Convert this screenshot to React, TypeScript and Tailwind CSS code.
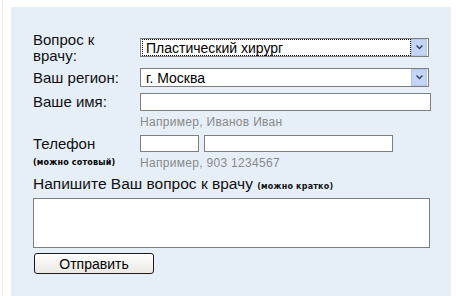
import { FC, ReactNode } from "react";

const Arrow: FC = () => (
  <div className="flex h-[17px] w-[16px] items-center justify-center border border-[#b4c8ee] bg-[#c3d4f7]">
    <svg width="7" height="5" viewBox="0 0 7 5">
      <path d="M0.5 0.5 L3.5 3.5 L6.5 0.5" fill="none" stroke="#34486e" strokeWidth="1.5" />
    </svg>
  </div>
);

const Select: FC<{ value: string; focused?: boolean }> = ({ value, focused }) => (
  <div className="flex h-[19px] w-[289px] items-center border border-[#7f7f7f] bg-white pl-[1px] pr-[1px]">
    <div
      className={
        focused
          ? "flex h-[17px] flex-1 items-center border border-dotted border-black pl-[3px] text-[14px] leading-none"
          : "flex h-[17px] flex-1 items-center pl-[4px] text-[14px] leading-none"
      }
    >
      {value}
    </div>
    <Arrow />
  </div>
);

const Label: FC<{ children: ReactNode }> = ({ children }) => (
  <div className="w-[107px] shrink-0 text-[15px] leading-[16px] text-[#111]">{children}</div>
);

const Hint: FC<{ children: ReactNode }> = ({ children }) => (
  <div className="text-[12px] leading-[14px] tracking-[0.3px] text-[#8a8a8a]">{children}</div>
);

const App: FC = () => {
  return (
    <div className="relative h-[296px] w-[456px] overflow-hidden bg-white font-['Liberation_Sans',Arial,sans-serif]">
      <div className="absolute left-[2px] top-0 h-full w-px bg-[#ececec]" />
      <div className="ml-[11px] mt-[7px] h-[289px] w-[440px] bg-[#e6eef8] pl-[22px] pt-[25px]">
        {/* вопрос к врачу */}
        <div className="flex items-start">
          <Label>
            Вопрос к
            <br />
            врачу:
          </Label>
          <div className="mt-[6px]">
            <Select value="Пластический хирург" focused />
          </div>
        </div>

        {/* регион */}
        <div className="mt-[4px] flex items-center">
          <Label>Ваш регион:</Label>
          <Select value="г. Москва" />
        </div>

        {/* имя */}
        <div className="mt-[6px] flex items-center">
          <Label>Ваше имя:</Label>
          <div className="h-[18px] w-[291px] border border-[#7f7f7f] bg-white" />
        </div>
        <div className="mt-[4px] flex">
          <div className="w-[107px]" />
          <Hint>Например, Иванов Иван</Hint>
        </div>

        {/* телефон */}
        <div className="mt-[6px] flex items-center">
          <Label>Телефон</Label>
          <div className="h-[17px] w-[59px] border border-[#7f7f7f] bg-white" />
          <div className="ml-[5px] h-[17px] w-[189px] border border-[#7f7f7f] bg-white" />
        </div>
        <div className="mt-[4px] flex items-center">
          <div className="w-[107px] font-['DejaVu_Sans',Verdana,sans-serif] text-[8px] font-bold leading-[14px] tracking-[0.2px]">
            (можно сотовый)
          </div>
          <Hint>Например, 903 1234567</Hint>
        </div>

        {/* вопрос */}
        <div className="mt-[5px] text-[15.5px] leading-[18px] text-[#111]">
          Напишите Ваш вопрос к врачу{" "}
          <span className="font-['DejaVu_Sans',Verdana,sans-serif] text-[8px] font-bold tracking-[0.2px]">
            (можно кратко)
          </span>
        </div>
        <div className="mt-[2px] h-[50px] w-[397px] border border-[#7f7f7f] bg-white" />

        <button className="ml-[1px] mt-[5px] flex h-[21px] w-[120px] items-center justify-center rounded-[3px] border border-[#1c1c1c] bg-gradient-to-b from-white to-[#e9e8e2] text-[14px] leading-none text-black">
          Отправить
        </button>
      </div>
    </div>
  );
};

export default App;
